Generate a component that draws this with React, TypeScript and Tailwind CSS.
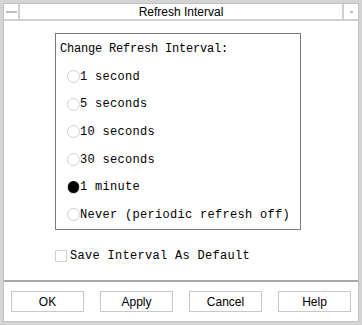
import React, { useState } from 'react';

const options = ['1 second', '5 seconds', '10 seconds', '30 seconds', '1 minute', 'Never (periodic refresh off)'];
const mono = { fontFamily: '"Liberation Mono", "DejaVu Sans Mono", monospace' };

export default function App() {
  const [value, setValue] = useState('1 minute');
  const [save, setSave] = useState(false);

  return (
    <div className="w-[362px] h-[325px] bg-[#d4d4d4] p-[3px] overflow-hidden" style={{ fontFamily: '"Liberation Sans", Arial, sans-serif' }}>
      <div className="w-full h-full bg-white flex flex-col border border-[#c0c0c0]">
        {/* title bar */}
        <div className="h-[17px] flex border-b-2 border-[#cfcfcf] shrink-0">
          <div className="w-[16px] flex items-center justify-center border-r-2 border-[#cfcfcf]">
            <div className="w-[11px] h-[2px] bg-[#bdbdbd]" />
          </div>
          <div className="flex-1 text-center text-[12px] leading-[16px] text-black">Refresh Interval</div>
          <div className="w-[16px] flex items-center justify-center border-l-2 border-[#cfcfcf]">
            <div className="w-[3px] h-[2px] bg-[#bdbdbd]" />
          </div>
        </div>

        <div className="flex-1 flex flex-col">
          <div className="ml-[51px] mt-[12px] w-[246px] h-[197px] border border-[#7a7a7a] px-[4px] pt-[7px]" style={mono}>
            <div className="text-[12px] leading-[16px] text-black tracking-[-0.2px]">Change Refresh Interval:</div>
            <div className="mt-[6px] flex flex-col">
              {options.map((o) => (
                <label key={o} className="h-[27.6px] flex items-center cursor-pointer" onClick={() => setValue(o)}>
                  <span className="ml-[7px] w-[13px] h-[13px] rounded-full border border-[#d0d0d0] flex items-center justify-center">
                    {value === o && <span className="w-[12px] h-[12px] rounded-full bg-black" />}
                  </span>
                  <span className="text-[12px] text-black tracking-[0.3px]">{o}</span>
                </label>
              ))}
            </div>
          </div>

          <label className="ml-[51px] mt-[17px] flex items-center cursor-pointer" style={mono} onClick={() => setSave(!save)}>
            <span className="w-[12px] h-[12px] border border-[#d0d0d0] flex items-center justify-center text-[10px]">{save ? '✓' : ''}</span>
            <span className="ml-[3px] text-[12px] text-black tracking-[0.3px]">Save Interval As Default</span>
          </label>

          <div className="mt-auto border-t-2 border-[#a8a8a8] h-[41px] flex items-start pt-[9px] px-[7px] justify-between">
            {['OK', 'Apply', 'Cancel', 'Help'].map((b) => (
              <button key={b} className="w-[73px] h-[21px] border border-[#c8c8c8] bg-white text-[12px] text-black">
                {b}
              </button>
            ))}
          </div>
        </div>
      </div>
    </div>
  );
}
